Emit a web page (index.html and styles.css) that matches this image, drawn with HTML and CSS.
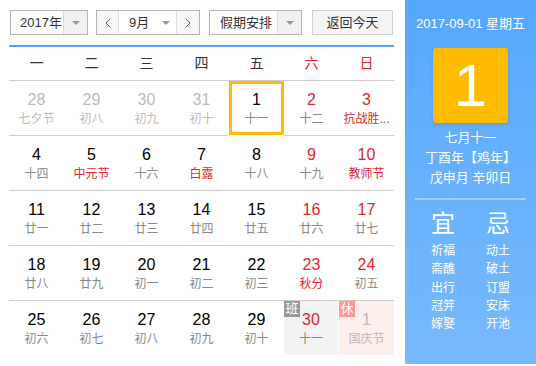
FILE: index.html
```html
<!DOCTYPE html>
<html lang="zh-CN">
<head>
  <meta charset="UTF-8">
  <title>万年历</title>
  <link rel="stylesheet" href="styles.css">
</head>
<body>
  <div class="calendar">
    <div class="main">
      <div class="toolbar">
        <div class="select year-select">
          <span class="select-text">2017年</span>
          <span class="select-arrow"><i class="tri"></i></span>
        </div>
        <div class="select month-select">
          <span class="nav-btn"><svg width="6" height="10" viewBox="0 0 6 10"><polyline points="5.5,0.5 1,5 5.5,9.5" fill="none" stroke="#666" stroke-width="1"/></svg></span>
          <span class="select-text">9月</span>
          <span class="select-arrow plain"><i class="tri"></i></span>
          <span class="nav-btn next"><svg width="6" height="10" viewBox="0 0 6 10"><polyline points="0.5,0.5 5,5 0.5,9.5" fill="none" stroke="#666" stroke-width="1"/></svg></span>
        </div>
        <div class="select holiday-select">
          <span class="select-text">假期安排</span>
          <span class="select-arrow"><i class="tri"></i></span>
        </div>
        <div class="today-btn">返回今天</div>
      </div>

      <div class="week-head">
        <span>一</span><span>二</span><span>三</span><span>四</span><span>五</span><span class="red">六</span><span class="red">日</span>
      </div>

      <div class="days">
        <div class="day other"><b>28</b><em>七夕节</em></div>
        <div class="day other"><b>29</b><em>初八</em></div>
        <div class="day other"><b>30</b><em>初九</em></div>
        <div class="day other"><b>31</b><em>初十</em></div>
        <div class="day selected"><b>1</b><em>十一</em></div>
        <div class="day weekend"><b>2</b><em>十二</em></div>
        <div class="day weekend"><b>3</b><em class="fest">抗战胜...</em></div>

        <div class="day"><b>4</b><em>十四</em></div>
        <div class="day"><b>5</b><em class="fest">中元节</em></div>
        <div class="day"><b>6</b><em>十六</em></div>
        <div class="day"><b>7</b><em class="fest">白露</em></div>
        <div class="day"><b>8</b><em>十八</em></div>
        <div class="day weekend"><b>9</b><em>十九</em></div>
        <div class="day weekend"><b>10</b><em class="fest">教师节</em></div>

        <div class="day"><b>11</b><em>廿一</em></div>
        <div class="day"><b>12</b><em>廿二</em></div>
        <div class="day"><b>13</b><em>廿三</em></div>
        <div class="day"><b>14</b><em>廿四</em></div>
        <div class="day"><b>15</b><em>廿五</em></div>
        <div class="day weekend"><b>16</b><em>廿六</em></div>
        <div class="day weekend"><b>17</b><em>廿七</em></div>

        <div class="day"><b>18</b><em>廿八</em></div>
        <div class="day"><b>19</b><em>廿九</em></div>
        <div class="day"><b>20</b><em>初一</em></div>
        <div class="day"><b>21</b><em>初二</em></div>
        <div class="day"><b>22</b><em>初三</em></div>
        <div class="day weekend"><b>23</b><em class="fest">秋分</em></div>
        <div class="day weekend"><b>24</b><em>初五</em></div>

        <div class="day last"><b>25</b><em>初六</em></div>
        <div class="day last"><b>26</b><em>初七</em></div>
        <div class="day last"><b>27</b><em>初八</em></div>
        <div class="day last"><b>28</b><em>初九</em></div>
        <div class="day last"><b>29</b><em>初十</em></div>
        <div class="day last work weekend"><span class="tag">班</span><b>30</b><em>十一</em></div>
        <div class="day last rest other"><span class="tag">休</span><b>1</b><em>国庆节</em></div>
      </div>
    </div>

    <div class="side">
      <div class="side-date">2017-09-01 星期五</div>
      <div class="side-day">1</div>
      <div class="side-lunar">
        <p>七月十一</p>
        <p>丁酉年【鸡年】</p>
        <p>戊申月 辛卯日</p>
      </div>
      <div class="side-line"></div>
      <div class="almanac">
        <div class="almanac-col">
          <h3>宜</h3>
          <p>祈福</p><p>斋醮</p><p>出行</p><p>冠笄</p><p>嫁娶</p>
        </div>
        <div class="almanac-col">
          <h3>忌</h3>
          <p>动土</p><p>破土</p><p>订盟</p><p>安床</p><p>开池</p>
        </div>
      </div>
    </div>
  </div>
</body>
</html>
```

FILE: styles.css
```css
* { box-sizing: border-box; }
body { margin: 0; background: #fff; font-family: "Liberation Sans", Arial, "Noto Sans CJK SC", sans-serif; color: #000; }
p, h3 { margin: 0; }
.calendar { display: flex; width: 536px; height: 366px; }
.main { width: 385px; margin-left: 9px; }

/* toolbar */
.toolbar { display: flex; align-items: flex-start; height: 45px; padding-top: 10px; padding-left: 1px; }
.select { display: flex; height: 25px; border: 1px solid #b5b5b5; background: #fff; font-size: 13px; line-height: 23px; color: #333; }
.select-text { flex: 1; min-width: 0; padding-left: 9px; white-space: nowrap; }
.select-arrow { flex: none; width: 24px; border-left: 1px solid #ddd; background: #f1f1f1; display: flex; align-items: center; justify-content: center; }
.select-arrow.plain { border-left: none; background: #fff; width: 20px; }
.tri { width: 0; height: 0; border-left: 4px solid transparent; border-right: 4px solid transparent; border-top: 4px solid #999; }
.year-select { width: 78px; }
.month-select { width: 104px; margin-left: 8px; }
.month-select .select-text { padding-left: 10px; }
.nav-btn { flex: none; width: 22px; display: flex; align-items: center; justify-content: center; border-right: 1px solid #ddd; background: #f7f7f7; }
.nav-btn.next { border-right: none; border-left: 1px solid #ddd; width: 23px; }
.holiday-select { width: 93px; margin-left: 9px; }
.holiday-select .select-text { padding-left: 10px; }
.today-btn { width: 81px; height: 25px; margin-left: 10px; border: 1px solid #d0d0d0; background: #f5f5f5; font-size: 13px; line-height: 23px; text-align: center; color: #333; }

/* week header */
.week-head { display: grid; grid-template-columns: repeat(7, 55px); height: 36px; border-top: 2px solid #4ea6f9; border-bottom: 1px solid #ccc; font-size: 14px; line-height: 33px; text-align: center; color: #333; }
.red { color: #e0262b; }

/* days */
.days { display: grid; grid-template-columns: repeat(7, 55px); }
.day { position: relative; height: 55px; border-bottom: 1px solid #ccc; text-align: center; padding-top: 10px; }
.day.last { border-bottom: none; height: 54px; }
.day b { display: block; font-weight: normal; font-size: 16px; line-height: 18px; color: #000; }
.day em { display: block; font-style: normal; font-size: 12px; line-height: 20px; color: #888; white-space: nowrap; }
.day.weekend b { color: #e0262b; }
.day em.fest { color: #e0262b; }
.day.other b, .day.other em { color: #bbb; }
.day.selected { border: 3px solid #ffbb00; padding-top: 7px; height: 54px; margin-bottom: 1px; }
.day.work { background: #f3f3f3; margin-right: 1px; }
.day.rest { background: #fdeeec; }
.tag { position: absolute; left: 0; top: 0; width: 16px; height: 16px; font-size: 13px; line-height: 16px; color: #fff; text-align: center; }
.work .tag { background: #9a9a9a; }
.rest .tag { background: #ff978c; }

/* side panel */
.side { width: 131px; margin-left: 11px; height: 364px; background: linear-gradient(#56a8fd, #78bafd); color: #fff; text-align: center; }
.side-date { font-size: 13px; line-height: 18px; margin-top: 15px; }
.side-day { width: 75px; height: 75px; margin: 15px auto 0; background: #ffbb00; border-radius: 3px; box-shadow: 0 1px 3px rgba(0, 0, 0, 0.15); font-size: 60px; line-height: 75px; }
.side-lunar { margin-top: 5px; font-size: 13px; line-height: 20px; }
.side-line { height: 2px; margin: 10px 10px 0; background: rgba(255, 255, 255, 0.4); }
.almanac { display: flex; justify-content: center; gap: 31px; margin-top: 9px; }
.almanac h3 { font-size: 24px; font-weight: normal; line-height: 30px; margin-bottom: 3px; }
.almanac p { font-size: 12px; line-height: 18.3px; }
```
